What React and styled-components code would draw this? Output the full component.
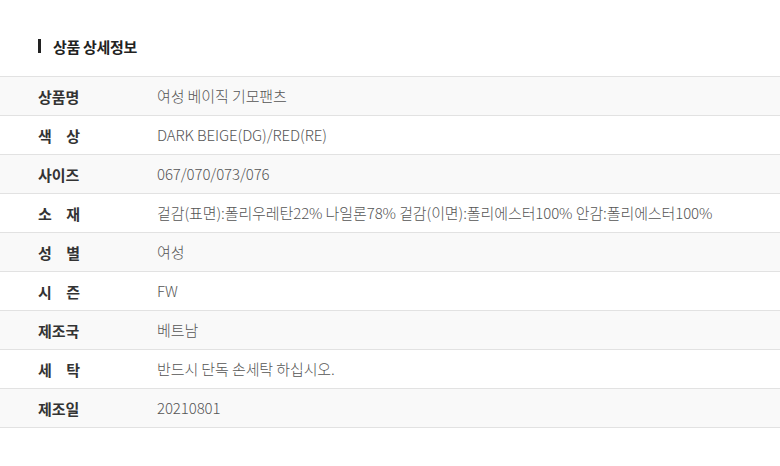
import React from "react";
import styled, { createGlobalStyle } from "styled-components";

const GlobalStyle = createGlobalStyle`
  html, body {
    margin: 0;
    padding: 0;
    background: #fff;
  }
  body {
    font-family: "Noto Sans CJK KR", "Noto Sans", sans-serif;
    color: #333;
  }
`;

const Section = styled.section`
  width: 780px;
  padding-top: 37px;
`;

const Title = styled.h3`
  display: flex;
  align-items: center;
  gap: 12px;
  margin: 0 0 21px;
  padding-left: 38px;
  height: 18px;
  font-size: 15px;
  font-weight: 700;
  color: #222;
  letter-spacing: -0.3px;

  &::before {
    content: "";
    display: block;
    width: 3px;
    height: 14px;
    background: #222;
  }
`;

const Table = styled.div`
  border-top: 1px solid #e2e2e2;
`;

const Row = styled.div`
  display: flex;
  align-items: center;
  height: 38px;
  padding-bottom: 1px;
  box-sizing: border-box;
  height: 39px;
  border-bottom: 1px solid #e2e2e2;
  background: ${(p) => (p.$shade ? "#f9f9f9" : "#fff")};
`;

const Label = styled.div`
  flex: 0 0 157px;
  padding-left: 38px;
  box-sizing: border-box;

  span {
    display: inline-block;
    width: 42px;
    text-align: justify;
    text-align-last: justify;
    font-size: 15px;
    font-weight: 700;
    color: #333;
  }
`;

const Value = styled.div`
  flex: 1;
  font-size: 15px;
  font-weight: 300;
  color: #555;
  letter-spacing: -0.1px;
  white-space: nowrap;
`;

const rows = [
  ["상품명", "여성 베이직 기모팬츠"],
  ["색 상", "DARK BEIGE(DG)/RED(RE)"],
  ["사이즈", "067/070/073/076"],
  ["소 재", "겉감(표면):폴리우레탄22% 나일론78% 겉감(이면):폴리에스터100% 안감:폴리에스터100%"],
  ["성 별", "여성"],
  ["시 즌", "FW"],
  ["제조국", "베트남"],
  ["세 탁", "반드시 단독 손세탁 하십시오."],
  ["제조일", "20210801"],
];

export default function App() {
  return (
    <>
      <GlobalStyle />
      <Section>
        <Title>상품 상세정보</Title>
        <Table>
          {rows.map(([label, value], i) => (
            <Row key={label} $shade={i % 2 === 0}>
              <Label>
                <span>{label}</span>
              </Label>
              <Value>{value}</Value>
            </Row>
          ))}
        </Table>
      </Section>
    </>
  );
}
